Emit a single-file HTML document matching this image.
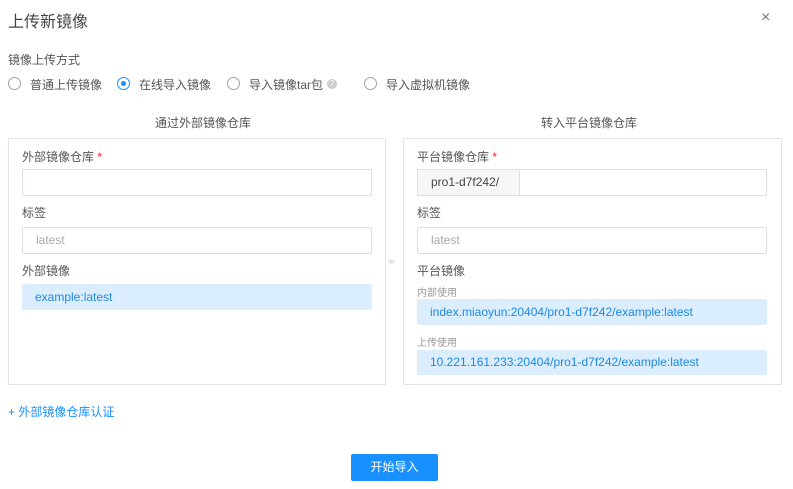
<!DOCTYPE html>
<html><head><meta charset="utf-8"><style>
*{box-sizing:border-box;margin:0;padding:0}
body{width:793px;height:489px;background:#fff;font-family:"Liberation Sans","Noto Sans CJK SC",sans-serif;color:#333;position:relative;overflow:hidden;font-size:12px}
.a{position:absolute;white-space:nowrap}
.t{color:#555}
.inp{position:absolute;border:1px solid #dcdfe6;height:27px;background:#fff;border-radius:2px}
.blue{position:absolute;background:#dbeeff;color:#1e88e5;padding-left:13px;line-height:26px;font-size:12px;border-radius:2px}
.r{position:absolute;width:13px;height:13px;border:1px solid #9aa3ad;border-radius:50%}
.panel{position:absolute;border:1px solid #e0e3e8;top:138px;height:247px}
</style></head><body>
<div class="a" style="left:8px;top:8px;font-size:16px;color:#444">上传新镜像</div>
<div class="a" style="left:761px;top:9px;font-size:16px;color:#777">×</div>
<div class="a t" style="left:8px;top:51px">镜像上传方式</div>
<div class="r" style="left:8px;top:77px"></div><div class="a t" style="left:30px;top:76px">普通上传镜像</div>
<div class="r" style="left:117px;top:77px;border-color:#1890ff"><div style="position:absolute;left:3px;top:3px;width:5px;height:5px;border-radius:50%;background:#1890ff"></div></div><div class="a t" style="left:139px;top:76px">在线导入镜像</div>
<div class="r" style="left:227px;top:77px"></div><div class="a t" style="left:249px;top:76px">导入镜像tar包</div>
<div class="a" style="left:327px;top:79px;width:10px;height:10px;border-radius:50%;background:#ccc;color:#fff;font-size:8px;text-align:center;line-height:10px">?</div>
<div class="r" style="left:364px;top:77px"></div><div class="a t" style="left:386px;top:76px">导入虚拟机镜像</div>
<div class="a t" style="left:155px;top:114px">通过外部镜像仓库</div>
<div class="a t" style="left:541px;top:114px">转入平台镜像仓库</div>
<div class="panel" style="left:8px;width:378px"></div>
<div class="panel" style="left:403px;width:379px"></div>
<div class="a t" style="left:22px;top:148px">外部镜像仓库 <span style="color:#f5222d">*</span></div>
<div class="inp" style="left:22px;top:169px;width:350px"></div>
<div class="a t" style="left:22px;top:204px">标签</div>
<div class="inp" style="left:22px;top:227px;width:350px;color:#aaa;padding-left:13px;line-height:25px">latest</div>
<div class="a t" style="left:22px;top:262px">外部镜像</div>
<div class="blue" style="left:22px;top:284px;width:350px;height:26px">example:latest</div>
<div class="a" style="left:388px;top:256px;color:#ccc;font-size:9px;letter-spacing:-3px">»»</div>
<div class="a t" style="left:417px;top:148px">平台镜像仓库 <span style="color:#f5222d">*</span></div>
<div class="inp" style="left:417px;top:169px;width:350px"></div>
<div class="a" style="left:417px;top:169px;width:103px;height:27px;background:#f7f7f7;border:1px solid #dcdfe6;padding-left:13px;line-height:25px;color:#444">pro1-d7f242/</div>
<div class="a t" style="left:417px;top:204px">标签</div>
<div class="inp" style="left:417px;top:227px;width:350px;color:#aaa;padding-left:13px;line-height:25px">latest</div>
<div class="a t" style="left:417px;top:262px">平台镜像</div>
<div class="a" style="left:417px;top:284px;font-size:10px;color:#999">内部使用</div>
<div class="blue" style="left:417px;top:299px;width:350px;height:26px">index.miaoyun:20404/pro1-d7f242/example:latest</div>
<div class="a" style="left:417px;top:334px;font-size:10px;color:#999">上传使用</div>
<div class="blue" style="left:417px;top:350px;width:350px;height:25px;line-height:24px">10.221.161.233:20404/pro1-d7f242/example:latest</div>
<div class="a" style="left:8px;top:403px;color:#1890ff">+ 外部镜像仓库认证</div>
<div class="a" style="left:351px;top:454px;width:87px;height:27px;background:#1890ff;border-radius:2px;color:#fff;text-align:center;line-height:27px">开始导入</div>
</body></html>
